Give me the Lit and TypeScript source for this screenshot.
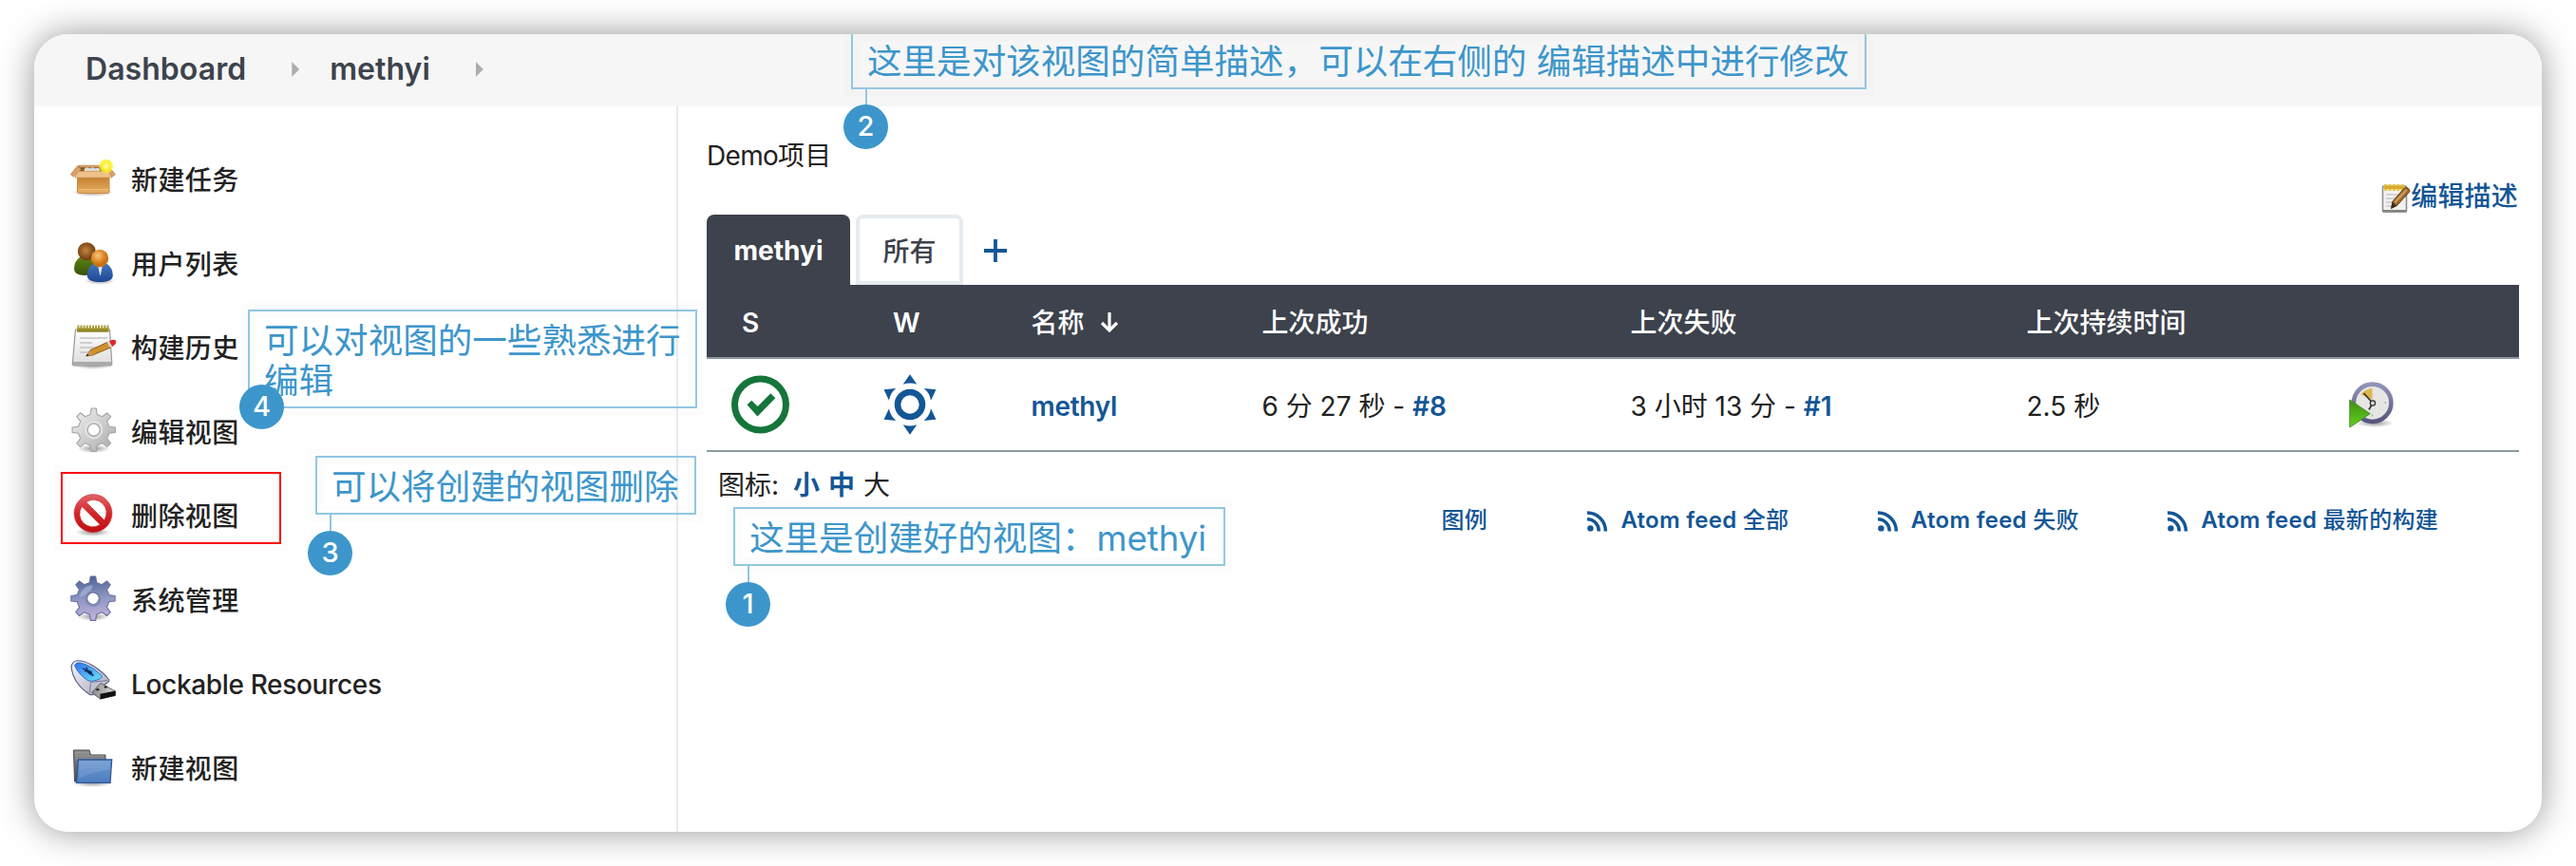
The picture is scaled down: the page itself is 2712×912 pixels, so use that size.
import { LitElement, html, css, svg, TemplateResult } from 'lit';
import { customElement } from 'lit/decorators.js';

const gearPath = (cx: number, cy: number, teeth: number, outer: number, inner: number, hole: number): string => {
  const pts: string[] = [];
  const step = (Math.PI * 2) / teeth;
  const at = (r: number, a: number) => `${(cx + r * Math.sin(a)).toFixed(2)} ${(cy - r * Math.cos(a)).toFixed(2)}`;
  for (let i = 0; i < teeth; i++) {
    const a = i * step;
    pts.push(at(inner, a - step * 0.27), at(outer, a - step * 0.15), at(outer, a + step * 0.15), at(inner, a + step * 0.27));
  }
  return `M${pts.join('L')}ZM${cx - hole} ${cy}a${hole} ${hole} 0 1 0 ${hole * 2} 0a${hole} ${hole} 0 1 0 ${-hole * 2} 0Z`;
};

const shadow = (cx: number, cy: number, rx: number) => svg`
  <defs><radialGradient id="sh"><stop offset="0" stop-color="#000" stop-opacity=".42"/><stop offset="1" stop-color="#000" stop-opacity="0"/></radialGradient></defs>
  <ellipse cx=${cx} cy=${cy} rx=${rx} ry="4.5" fill="url(#sh)"/>`;

const wrap = (body: TemplateResult) => html`<svg viewBox="0 0 48 48">${body}</svg>`;

const icons: Record<string, () => TemplateResult> = {
  box: () => wrap(svg`
    <defs>
      <linearGradient id="bf" x1="0" y1="0" x2="0" y2="1"><stop offset="0" stop-color="#c07a2c"/><stop offset="1" stop-color="#e9b063"/></linearGradient>
      <radialGradient id="bs"><stop offset="0" stop-color="#fffde0"/><stop offset=".4" stop-color="#fff23c"/><stop offset=".75" stop-color="#fbec28" stop-opacity=".85"/><stop offset="1" stop-color="#fbee40" stop-opacity="0"/></radialGradient>
    </defs>
    ${shadow(24, 39.5, 22)}
    <path d="M9 11.500h31l3 11H7z" fill="#8b5a22" stroke="#b77b3c"/>
    <path d="M15 14.500q3-2.500 5.500 0q3-2.500 5.500 0q3-1.500 5 .5v4H14z" fill="#dcdcd8"/>
    <path d="M9 10.800h30l1 2.400H9.500z" fill="#cf9d6b"/>
    <path d="M8 11.500L.6 20.500l2.800 2.500L11.500 15.500z" fill="#d8a26a" stroke="#a8703a" stroke-width=".8"/>
    <path d="M40 12.500l7.200 8-2.800 2.500L37 15.500z" fill="#d8a26a" stroke="#a8703a" stroke-width=".8"/>
    <path d="M7.500 22h33.500v16.500q0 2-2 2H9.500q-2 0-2-2z" fill="url(#bf)" stroke="#c98a41"/>
    <path d="M8.500 17.500h31.500l4 6.500H4.800z" fill="#edc18a" stroke="#d19b5a" stroke-width=".8"/>
    <path d="M8.500 36.500h31.500" stroke="#f3cb8c" opacity=".7"/>
    <circle cx="37.700" cy="12" r="8.200" fill="url(#bs)"/>`),
  users: () => wrap(svg`
    <defs>
      <radialGradient id="u1" cx=".45" cy=".45"><stop offset="0" stop-color="#c48242"/><stop offset="1" stop-color="#744211"/></radialGradient>
      <radialGradient id="u2" cx=".4" cy=".35"><stop offset="0" stop-color="#f8c68a"/><stop offset=".6" stop-color="#e5912f"/><stop offset="1" stop-color="#c57312"/></radialGradient>
      <linearGradient id="u3" x1="0" y1="0" x2="0" y2="1"><stop offset="0" stop-color="#5f8213"/><stop offset="1" stop-color="#37520a"/></linearGradient>
      <linearGradient id="u4" x1="0" y1="0" x2="0" y2="1"><stop offset="0" stop-color="#4474bc"/><stop offset="1" stop-color="#1c4696"/></linearGradient>
    </defs>
    ${shadow(31, 43.5, 16)}
    <path d="M4 31q0-8 6-12h14l3 16q-4 3-12 3-11 0-11-7z" fill="url(#u3)"/>
    <circle cx="17.300" cy="12.700" r="9.500" fill="url(#u1)"/>
    <path d="M17.800 38q0-8 6-12h15q6 4 6 12 0 7-13.500 7t-13.500-7z" fill="url(#u4)"/>
    <path d="M29 27.500h5l-2.200 10.500h-.6z" fill="#dfe6f1"/>
    <circle cx="31" cy="20" r="9.200" fill="url(#u2)"/>`),
  notepad: () => wrap(svg`
    <defs><linearGradient id="n1" x1="0" y1="0" x2="0" y2="1"><stop offset="0" stop-color="#fff"/><stop offset="1" stop-color="#ddd"/></linearGradient></defs>
    ${shadow(24, 43.5, 22)}
    <path d="M5.500 6h36l2.300 36q0 1.800-2 1.800H4q-2 0-1.700-1.800z" fill="url(#n1)" stroke="#999" stroke-width="1.200"/>
    <path d="M3 41.500h40" stroke="#aaa" stroke-width="3"/>
    <path d="M7 4.500h33.500v4.300H7z" fill="#8f8426"/>
    <path d="M7.500 4h33" stroke="#a89c34" stroke-width="5" stroke-dasharray="1.900 1.200"/>
    <path d="M10 15h29M10 20h13M10 25h23M10 30h8" stroke="#c4c4c6" stroke-width="1.700"/>
    <path d="M16.700 34l4.200-6.200 18.600-8.600 3.500 5.600-19.500 8.200z" fill="#d0902c" stroke="#875510" stroke-width=".9"/>
    <path d="M16.700 34l4.200-6.200 2.600 5.200z" fill="#c99a5c"/>
    <path d="M16.700 34l1.700-2.500 1.100 2z" fill="#222"/>
    <path d="M38.500 19.500l3.200-1.500 3.400 5.700-3.300 1.400z" fill="#d3d3d3"/>
    <path d="M41 18.200q5-2.200 6.600-.8 1.200 2-.3 4l-3 2.500z" fill="#e0242a"/>`),
  gear: () => wrap(svg`
    <defs><linearGradient id="g1" x1="0" y1="0" x2="1" y2="1"><stop offset="0" stop-color="#f2f2f2"/><stop offset="1" stop-color="#a9a9a9"/></linearGradient></defs>
    ${shadow(24.5, 43.5, 17)}
    <path d=${gearPath(24.7, 23.7, 8, 22.8, 16.6, 6.4)} fill="url(#g1)" stroke="#a5a5a5" stroke-width="1.100" fill-rule="evenodd" stroke-linejoin="round"/>
    <circle cx="24.700" cy="23.700" r="8.700" fill="none" stroke="#e2e2e2" stroke-width="2"/>`),
  forbidden: () => wrap(svg`
    <defs><linearGradient id="f1" x1="0" y1="0" x2="0" y2="1"><stop offset="0" stop-color="#e06468"/><stop offset=".5" stop-color="#d3262b"/><stop offset="1" stop-color="#c00d14"/></linearGradient></defs>
    ${shadow(24, 42.500, 19)}
    <circle cx="24" cy="22.600" r="16.700" fill="#fff"/>
    <path fill="url(#f1)" stroke="#c7373b" stroke-width=".6" fill-rule="evenodd" d="M24 2.600a20 20 0 1 1 0 40a20 20 0 1 1 0-40zM16.800 10.800L35.700 29.700A13.600 13.600 0 0 0 16.800 10.800zM12.300 15.500A13.600 13.600 0 0 0 31.200 34.400z"/>`),
  manage: () => wrap(svg`
    <defs><linearGradient id="m1" x1=".4" y1="0" x2=".5" y2="1"><stop offset="0" stop-color="#4a6396"/><stop offset=".5" stop-color="#8e96c2"/><stop offset="1" stop-color="#c3b4dc"/></linearGradient></defs>
    ${shadow(24, 43.500, 17)}
    <path d=${gearPath(24, 24.2, 8, 23.3, 17.2, 6.300)} fill="url(#m1)" stroke="#67709a" stroke-width="1.100" fill-rule="evenodd" stroke-linejoin="round"/>
    <path d="M10 23q2-12 14-13-2 9-14 13z" fill="#b9cbe6" opacity=".5"/>
    <circle cx="24" cy="24.200" r="7.800" fill="none" stroke="#7f8ab5" stroke-width="1.500"/>`),
  usb: () => wrap(svg`
    <defs>
      <linearGradient id="k1" x1="0" y1="0" x2="1" y2="1"><stop offset="0" stop-color="#f4f4fa"/><stop offset="1" stop-color="#a9a9bd"/></linearGradient>
      <linearGradient id="k2" x1="0" y1="0" x2="1" y2="1"><stop offset="0" stop-color="#2f6ff0"/><stop offset="1" stop-color="#6fe6fa"/></linearGradient>
      <linearGradient id="k3" x1="0" y1="0" x2="1" y2="0"><stop offset="0" stop-color="#888"/><stop offset="1" stop-color="#ddd"/></linearGradient>
    </defs>
    <path d="M1 7Q2.500.8 8 .8q6 0 14 4.200 12 7 18.500 15.500.8 1.200 0 2.200L24 36.500q-2 .8-4-.5Q3 25 1 7z" fill="url(#k1)" stroke="#54547a" stroke-width="1.100"/>
    <path d="M4.500 5.500Q6 2.300 10.500 3q12 2.500 23.500 14.500-2.500 3-7 4-4.500 1.200-8 .5Q8 15 4.500 5.500z" fill="url(#k2)" stroke="#2a67b5" stroke-width=".9"/>
    <path d="M13 8.500l11.500 8M15 12l3.500-1.300 3.500 2.500M17 7.500l.5 4.500 4 3.500M21.500 11.500l2 5.500" fill="none" stroke="#0b2c55" stroke-width="1.400"/>
    <path d="M21.500 23.500L39 21.500M21.500 23.500l-1 11" stroke="#77779a" fill="none" stroke-width="1"/>
    <path d="M22.500 34.500l9.500-10 15.500 8.500v4.500L31.500 41z" fill="url(#k3)" stroke="#555" stroke-width=".9"/>
    <path d="M31.500 35.800l16-3.300v5L31.500 41.600z" fill="#111"/>
    <path d="M27 30.500l3-.6.500 2-3 .5zM35.500 27.800l3-.6.500 2-3 .5z" fill="#222"/>`),
  folder: () => wrap(svg`
    <defs>
      <linearGradient id="d1" x1="0" y1="0" x2="0" y2="1"><stop offset="0" stop-color="#8d8d8d"/><stop offset="1" stop-color="#4c4c4c"/></linearGradient>
      <linearGradient id="d2" x1="0" y1="0" x2="0" y2="1"><stop offset="0" stop-color="#7099d0"/><stop offset="1" stop-color="#4c7dc0"/></linearGradient>
    </defs>
    ${shadow(23.500, 40.500, 23)}
    <path d="M3.500 6h16.500l1.500 5H37v28H4.500z" fill="url(#d1)" stroke="#4a4a4a"/>
    <path d="M5 9h15M5 12h31M5 15h31" stroke="#aaa" stroke-width=".7"/>
    <path d="M8.300 16h35.400L42 40.400H6.500z" fill="url(#d2)" stroke="#2b5799" stroke-width="1.300"/>
    <path d="M9.600 17.500h32.600l-.7 9Q24 28 9 36z" fill="#fff" opacity=".1"/>`),
};

const rss = html`<svg class="rss" viewBox="0 0 22 22"><circle cx="3.400" cy="18.400" r="3.200" fill="currentColor"/><path d="M0 8.800a12.200 12.200 0 0 1 12.200 12.700M0 1.900a19.300 19.300 0 0 1 19.300 19.600" fill="none" stroke="currentColor" stroke-width="3.500"/></svg>`;

const tasks: [string, string][] = [
  ['box', '新建任务'],
  ['users', '用户列表'],
  ['notepad', '构建历史'],
  ['gear', '编辑视图'],
  ['forbidden', '删除视图'],
  ['manage', '系统管理'],
  ['usb', 'Lockable Resources'],
  ['folder', '新建视图'],
];

const notes: [number, string][] = [
  [1, '这里是创建好的视图：methyi'],
  [2, '这里是对该视图的简单描述，可以在右侧的 编辑描述中进行修改'],
  [3, '可以将创建的视图删除'],
  [4, '可以对视图的一些熟悉进行编辑'],
];

@customElement('app-root')
export class AppRoot extends LitElement {
  static styles = css`
    :host { display: block; box-sizing: border-box; width: 2712px; height: 912px; padding: 36px; position: relative; overflow: hidden;
      background: #fff; color: #222; font: 400 28px/40px Inter, "Noto Sans CJK SC", sans-serif; }
    * { box-sizing: border-box; }
    svg { display: block; flex: none; }
    .panel { height: 840px; border-radius: 36px; overflow: hidden; background: #fff; display: flex; flex-direction: column; }
    .frame { border-radius: 36px; box-shadow: 0 0 36px rgba(0, 0, 0, .42); }
    .crumbs { height: 76px; flex: none; background: #f6f6f6; display: flex; align-items: center; padding: 0 0 2px 54px; font-weight: 600; font-size: 32px; color: #3c434d; }
    .crumb { letter-spacing: .05px; }
    .tri { width: 8px; height: 16px; background: #aeaeae; clip-path: polygon(0 0, 100% 50%, 0 100%); }
    .tri.a { margin: 0 32px 0 48px; }
    .tri.b { margin-left: 48px; }
    .body { flex: 1; display: flex; }
    .side { width: 678px; flex: none; border-right: 2px solid #e6ebef; padding: 32.700px 0 0 38px; }
    .task { height: 88.600px; display: flex; align-items: center; gap: 16px; font-weight: 500; }
    .task svg { width: 48px; height: 48px; margin-bottom: 3px; }
    .task span { letter-spacing: .4px; padding-top: 2px; }
    .task .latin { letter-spacing: -.34px; padding-top: 0; }
    .latin { letter-spacing: -.3px; }
    .main { flex: 1; padding: 32px 24px 0 30px; display: flex; flex-direction: column; }
    .demo { letter-spacing: -.7px; }
    .cjk { letter-spacing: .2px; }
    .edit { align-self: flex-end; display: flex; align-items: center; margin-top: 2px; height: 40px; color: #145696; font-weight: 500; padding-right: 1px; }
    .edit svg { width: 32px; height: 32px; margin-top: 4px; }
    .edit span { letter-spacing: .2px; padding-top: 1px; }
    .tabs { display: flex; height: 74px; align-items: stretch; }
    .tab { display: flex; align-items: center; justify-content: center; border-radius: 8px 8px 0 0; padding-top: 2px; }
    .on { width: 151px; background: #3d424c; color: #fff; font-weight: 700; }
    .off { width: 113px; margin: 0 22px 0 6px; border: 4px solid #e6ebef; font-weight: 500; color: #3d424c; padding-top: 3px; }
    .plus { width: 24px; margin-top: 26px; height: 24px; }
    .row { display: grid; grid-template-columns: 158px 160px 243px 388px 417px 339px 1fr; align-items: center; }
    .row > div { padding-left: 23.500px; display: flex; align-items: center; white-space: pre; }
    .head { height: 78px; background: #3d424c; color: #fff; font-weight: 500; border-bottom: 2px solid #8a95a1; padding-top: 4px; }
    .head .s { padding-left: 37px; font-weight: 600; }
    .head .w { padding-left: 38px; font-weight: 600; }
    .arrow { width: 20px; height: 22px; margin: 0 0 2px 16px; }
    .data { height: 98px; border-bottom: 2px solid #8b999f; }
    .data .val { padding-top: 3px; }
    .data svg { width: 64px; height: 64px; }
    .data svg.sched { width: 48px; height: 48px; }
    a { color: #145696; font-weight: 600; }
    .sizes { display: flex; margin: 15px 0 0 12px; height: 40px; white-space: pre; }
    .sizes .lab { width: 79px; }
    .sizes a { margin-right: 9px; }
    .links { display: flex; justify-content: flex-end; align-items: center; height: 36px; margin: -1px 85px 0 0; font-size: 24px; color: #145696; font-weight: 600; }
    .link { display: flex; align-items: center; margin-left: 93.500px; letter-spacing: .28px; white-space: pre; }
    .link em { font-style: normal; font-weight: 500; }
    .legend { margin-right: 12px; }
    .rss { width: 22px; height: 22px; margin: 1px 13px 0 0; }
    .mark, .red { position: absolute; box-shadow: 0 0 0 7px rgba(0, 0, 0, .013), inset 0 0 0 7px rgba(0, 0, 0, .013); }
    .mark { border: 2px solid #93c6e1; color: #3d96cb; font-size: 36.600px; line-height: 42.400px; padding: 10px 0 0 15px; }
    .txt { letter-spacing: -.03px; }
    .dot { position: absolute; width: 47px; height: 47px; border-radius: 50%; background: #3d96cb; color: #fff; font: 500 29px/45px Inter, sans-serif; text-align: center; left: -10px; }
    .line { position: absolute; left: 13px; width: 2px; height: 20px; background: #93c6e1; top: 100%; }
    .m1 { left: 772px; top: 534px; width: 518px; height: 62px; }
    .m1 .dot { top: 77px; left: -10px; }
    .m2 { left: 896px; top: 36px; width: 1069px; height: 58px; border-top: 0; padding-top: 8px; white-space: nowrap; clip-path: inset(0 -20px -90px -20px); }
    .m2 .dot { top: 74px; left: -10px; }
    .m3 { left: 332px; top: 480px; width: 401px; height: 62px; }
    .m3 .dot { top: 77px; left: -10px; }
    .m4 { left: 261px; top: 326px; width: 473px; height: 104px; }
    .m4 .dot { top: 77px; left: -11px; }
    .m4 .line { display: none; }
    .red { left: 64px; top: 497px; width: 232px; height: 76px; border: 2px solid #fb0d0d; }
  `;

  render() {
    return html`
      <div class="frame"><div class="panel">
        <div class="crumbs">
          <span class="crumb">Dashboard</span><i class="tri a"></i><span class="crumb">methyi</span><i class="tri b"></i>
        </div>
        <div class="body">
          <div class="side">
            ${tasks.map(([icon, label]) => html`<div class="task">${icons[icon]()}<span class=${icon === 'usb' ? 'latin' : ''}>${label}</span></div>`)}
          </div>
          <div class="main">
            <div class="demo">Demo<span class="cjk">项目</span></div>
            <div class="edit">
              <svg viewBox="0 0 32 32">
                <rect x="2.500" y="4" width="25" height="27" rx="1.500" fill="#f1f1f1" stroke="#8f8f89" stroke-width="1.600"/>
                <path d="M2.500 30.200h25" stroke="#85857f" stroke-width="2.400"/>
                <path d="M6 13h18M6 17h14M6 21h11M6 25h8" stroke="#c8c8c8" stroke-width="1.400"/>
                <path d="M4 5.500h21" stroke="#e9c54a" stroke-width="7" stroke-dasharray="3.200 1.200"/>
                <path d="M4 5.500h21" stroke="#d9ab2c" stroke-width="3"/>
                <path d="M11.500 27.500l1.500-7.500L25.500 5.800q4.500-1.200 5.500 3.700L18 24z" fill="#a06c30" stroke="#5f3d14" stroke-width="1"/>
                <path d="M15.500 21L27.500 8" stroke="#cf9f60" stroke-width="2"/>
                <path d="M11.500 27.500l1.200-6.500 4.600 4z" fill="#3b2b1a"/>
              </svg>
              <span>编辑描述</span>
            </div>
            <div class="tabs">
              <div class="tab on">methyi</div>
              <div class="tab off">所有</div>
              <svg class="plus" viewBox="0 0 24 24"><path d="M12 0v24M0 12h24" stroke="#145696" stroke-width="3.800"/></svg>
            </div>
            <div class="row head">
              <div class="s">S</div><div class="w">W</div>
              <div>名称<svg class="arrow" viewBox="0 0 20 22"><path d="M10 1v18M2 12l8 8 8-8" fill="none" stroke="#fff" stroke-width="3.200"/></svg></div>
              <div>上次成功</div><div>上次失败</div><div>上次持续时间</div><div></div>
            </div>
            <div class="row data">
              <div><svg viewBox="0 0 64 64"><circle cx="32.500" cy="32" r="27" fill="none" stroke="#16753a" stroke-width="7"/><path d="M18.500 32.300l4.800-4.600 6.400 6.200L43.300 20.300l5 5L29.500 44.500z" fill="#16753a"/></svg></div>
              <div><svg viewBox="0 0 64 64"><circle cx="32" cy="32" r="13" fill="none" stroke="#145696" stroke-width="6.600"/>
                ${[0, 60, 120, 180, 240, 300].map((a) => svg`<path transform="rotate(${a} 32 32)" d="M32 .3l7.300 10.500q-7.300-2.800-14.600 0z" fill="#145696"/>`)}</svg></div>
              <div class="val"><a class="latin">methyl</a></div>
              <div class="val">6 分 27 秒 - <a>#8</a></div>
              <div class="val">3 小时 13 分 - <a>#1</a></div>
              <div class="val">2.5 秒</div>
              <div><svg class="sched" viewBox="0 0 48 48">
                <defs><linearGradient id="t1" x1="0" y1="0" x2="0" y2="1"><stop offset="0" stop-color="#3f8c12"/><stop offset="1" stop-color="#62d41e"/></linearGradient>
                <linearGradient id="t2" x1="0" y1="0" x2="0" y2="1"><stop offset="0" stop-color="#9393b8"/><stop offset="1" stop-color="#55557f"/></linearGradient></defs>
                ${shadow(27, 43.500, 20)}
                <circle cx="24.700" cy="22.300" r="19.700" fill="#e6e6e2" stroke="url(#t2)" stroke-width="4.600"/>
                <path d="M12.500 13.500q4-5.500 12-6.500v12z" fill="#dfb54e"/>
                <path d="M15.500 12l9.500 10.500M25 22.500l-4 7" stroke="#333" stroke-width="1.700"/>
                <circle cx="25" cy="22.500" r="2.600" fill="#ddd" stroke="#333" stroke-width="1.300"/>
                <path d="M37.500 22h2M24.500 34.500v2" stroke="#aaa" stroke-width="1.500"/>
                <path d="M.8 19l21.500 14.700L.8 48z" fill="url(#t1)" stroke="#4e8b34" stroke-width="1"/>
              </svg></div>
            </div>
            <div class="sizes"><span class="lab">图标:</span><a>小</a><a>中</a><span>大</span></div>
            <div class="links">
              <span class="link legend"><em>图例</em></span>
              ${['全部', '失败', '最新的构建'].map((t) => html`<span class="link">${rss}Atom feed <em>${t}</em></span>`)}
            </div>
          </div>
        </div>
      </div></div>
      <div class="red"></div>
      ${notes.map(([n, text]) => html`<div class="mark m${n}"><span class="txt">${text}</span><i class="line"></i><b class="dot">${n}</b></div>`)}
    `;
  }
}
